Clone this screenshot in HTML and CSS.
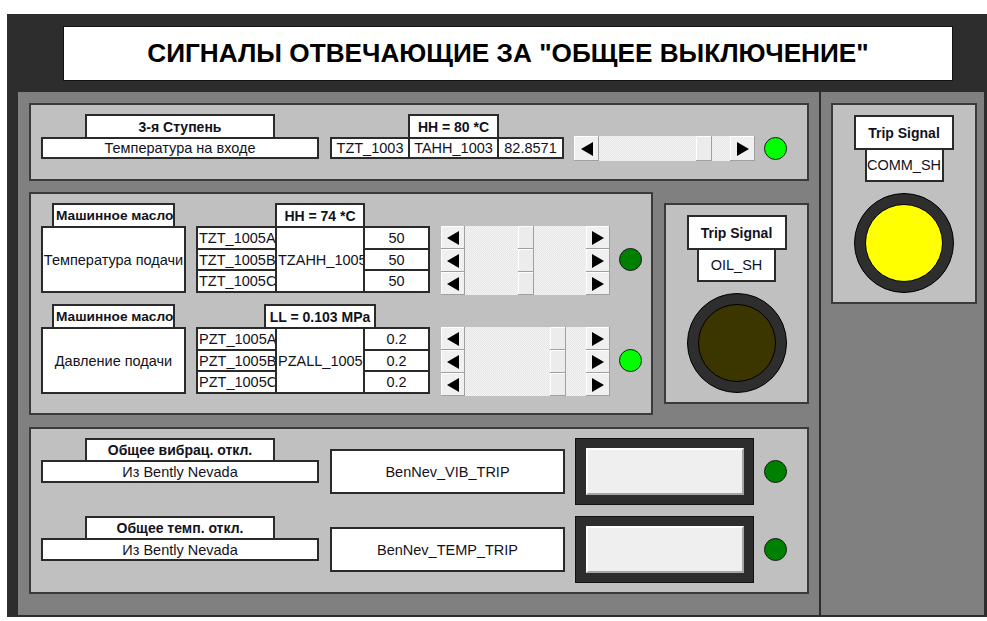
FILE: index.html
```html
<!DOCTYPE html>
<html lang="ru">
<head>
<meta charset="utf-8">
<title>Общее выключение</title>
<link rel="stylesheet" href="styles.css">
</head>
<body>
<div class="screen">
  <div class="title">СИГНАЛЫ ОТВЕЧАЮЩИЕ ЗА "ОБЩЕЕ ВЫКЛЮЧЕНИЕ"</div>
  <div class="body">
    <div class="main">

      <!-- 3rd stage inlet temperature -->
      <section class="panel p-inlet">
        <div class="cap-col w278">
          <div class="cap w190">3-я Ступень</div>
          <div class="cell h22 w278">Температура на входе</div>
        </div>
        <div class="cell h22 tag1003">TZT_1003</div>
        <div class="cap-col w91 join">
          <div class="cap w91">HH = 80 *C</div>
          <div class="cell h22 w91">TAHH_1003</div>
        </div>
        <div class="cell h22 w67 join">82.8571</div>
        <div class="sb sb-wide">
          <span class="sb-btn sb-l"></span>
          <span class="sb-track"><span class="sb-thumb" style="margin-left:97px"></span></span>
          <span class="sb-btn sb-r"></span>
        </div>
        <span class="led led-on led-inlet"></span>
      </section>

      <div class="row-mid">
        <!-- lube oil: temperature and pressure -->
        <section class="panel p-oil">
          <div class="grp">
            <div class="cap-col w145">
              <div class="cap w123 cap-l">Машинное масло</div>
              <div class="cell tall w145">Температура подачи</div>
            </div>
            <div class="stack tags">
              <div class="cell left">TZT_1005A</div>
              <div class="cell left">TZT_1005B</div>
              <div class="cell left">TZT_1005C</div>
            </div>
            <div class="cap-col w90 join">
              <div class="cap w90">HH = 74 *C</div>
              <div class="cell tall w90 left">TZAHH_1005</div>
            </div>
            <div class="stack vals join">
              <div class="cell">50</div>
              <div class="cell">50</div>
              <div class="cell">50</div>
            </div>
            <div class="sb-stack">
              <div class="sb"><span class="sb-btn sb-l"></span><span class="sb-track"><span class="sb-thumb" style="margin-left:53px"></span></span><span class="sb-btn sb-r"></span></div>
              <div class="sb"><span class="sb-btn sb-l"></span><span class="sb-track"><span class="sb-thumb" style="margin-left:53px"></span></span><span class="sb-btn sb-r"></span></div>
              <div class="sb"><span class="sb-btn sb-l"></span><span class="sb-track"><span class="sb-thumb" style="margin-left:53px"></span></span><span class="sb-btn sb-r"></span></div>
            </div>
            <span class="led led-off led-grp"></span>
          </div>

          <div class="grp grp-2">
            <div class="cap-col w145">
              <div class="cap w123 cap-l">Машинное масло</div>
              <div class="cell tall w145">Давление подачи</div>
            </div>
            <div class="stack tags">
              <div class="cell left">PZT_1005A</div>
              <div class="cell left">PZT_1005B</div>
              <div class="cell left">PZT_1005C</div>
            </div>
            <div class="cap-col w90 join">
              <div class="cap w112">LL = 0.103 MPa</div>
              <div class="cell tall w90 left">PZALL_1005</div>
            </div>
            <div class="stack vals join">
              <div class="cell">0.2</div>
              <div class="cell">0.2</div>
              <div class="cell">0.2</div>
            </div>
            <div class="sb-stack">
              <div class="sb"><span class="sb-btn sb-l"></span><span class="sb-track"><span class="sb-thumb" style="margin-left:85px"></span></span><span class="sb-btn sb-r"></span></div>
              <div class="sb"><span class="sb-btn sb-l"></span><span class="sb-track"><span class="sb-thumb" style="margin-left:85px"></span></span><span class="sb-btn sb-r"></span></div>
              <div class="sb"><span class="sb-btn sb-l"></span><span class="sb-track"><span class="sb-thumb" style="margin-left:85px"></span></span><span class="sb-btn sb-r"></span></div>
            </div>
            <span class="led led-on led-grp"></span>
          </div>
        </section>

        <!-- oil trip lamp -->
        <section class="panel trip">
          <div class="trip-cap">Trip Signal</div>
          <div class="trip-sub">OIL_SH</div>
          <div class="lamp"><i class="lamp-off"></i></div>
        </section>
      </div>

      <!-- Bently Nevada trips -->
      <section class="panel p-bn">
        <div class="bn-row">
          <div class="cap-col w278 bn-head">
            <div class="cap w190 h24">Общее вибрац. откл.</div>
            <div class="cell w278 h23">Из Bently Nevada</div>
          </div>
          <div class="cell bn-tag">BenNev_VIB_TRIP</div>
          <div class="bn-disp"><div class="bn-screen"></div></div>
          <span class="led led-off led-bn"></span>
        </div>
        <div class="bn-row bn-row-2">
          <div class="cap-col w278 bn-head">
            <div class="cap w190 h24">Общее темп. откл.</div>
            <div class="cell w278 h23">Из Bently Nevada</div>
          </div>
          <div class="cell bn-tag">BenNev_TEMP_TRIP</div>
          <div class="bn-disp"><div class="bn-screen"></div></div>
          <span class="led led-off led-bn"></span>
        </div>
      </section>
    </div>

    <div class="side">
      <!-- common trip lamp -->
      <section class="panel trip trip-comm">
        <div class="trip-cap">Trip Signal</div>
        <div class="trip-sub">COMM_SH</div>
        <div class="lamp"><i class="lamp-on"></i></div>
      </section>
    </div>
  </div>
</div>
</body>
</html>
```

FILE: styles.css
```css
* { box-sizing: border-box; }

html, body {
  margin: 0;
  background: #fff;
}

body {
  font-family: "Liberation Sans", Arial, sans-serif;
  font-size: 14.5px;
  color: #12121c;
}

/* outer dark frame */
.screen {
  margin: 14px 0 0 7px;
  width: 980px;
  height: 603px;
  background: #2d2d2d;
  padding: 12px 3px 2px 11px;
  display: flex;
  flex-direction: column;
}

.title {
  margin-left: 45px;
  width: 890px;
  height: 55px;
  flex: none;
  background: #fff;
  border: 1px solid #111;
  display: flex;
  align-items: center;
  justify-content: center;
  font-weight: bold;
  font-size: 26.2px;
  color: #000;
  white-space: nowrap;
  padding-bottom: 1px;
}

.body {
  margin-top: 11px;
  flex: 1;
  display: flex;
}

.main {
  width: 801px;
  background: #808080;
  padding: 11px 0 0 11px;
}

.side {
  flex: 1;
  background: #808080;
  border-left: 2px solid #2d2d2d;
  padding: 11px 0 0 10px;
}

.panel {
  background: #c0c0c0;
  border: 2px solid #3a3a3a;
}

/* generic boxes */
.cell {
  background: #fff;
  border: 2px solid #2a2a2a;
  display: flex;
  align-items: center;
  justify-content: center;
  white-space: nowrap;
  padding: 0 1px;
}

.cell.left { justify-content: flex-start; }

.cap {
  height: 25px;
  margin-bottom: -2px;
  background: #fff;
  border: 2px solid #2a2a2a;
  display: flex;
  align-items: center;
  justify-content: center;
  white-space: nowrap;
  font-weight: bold;
  font-size: 14px;
  position: relative;
}

.cap-l { justify-content: flex-start; padding-left: 2px; font-size: 13.7px; }

.cap-col {
  display: flex;
  flex-direction: column;
  align-items: center;
}

.join { margin-left: -2px; }

.h22 { height: 22px; }
.h23 { height: 23px; }
.h24 { height: 24px; }
.tall { height: 67px; }

.w67 { width: 67px; }
.w90 { width: 90px; }
.w91 { width: 91px; }
.w112 { width: 112px; flex: none; }
.w123 { width: 123px; }
.w145 { width: 145px; }
.w190 { width: 190px; }
.w278 { width: 278px; }

/* inlet temperature panel */
.p-inlet {
  width: 780px;
  height: 78px;
  display: flex;
  align-items: flex-end;
  padding: 0 0 20px 10px;
}

.tag1003 {
  margin-left: 11px;
  width: 80px;
}

/* scrollbars */
.sb {
  display: flex;
  height: 23px;
}

.sb-wide {
  margin-left: 10px;
  width: 181px;
  height: 25px;
  margin-bottom: -2px;
}

.sb-btn {
  width: 24px;
  flex: none;
  background: #f0f0f0;
  box-shadow: inset -1px -1px 0 #a0a0a0, inset 1px 1px 0 #fff;
  display: flex;
  align-items: center;
  justify-content: center;
}

.sb-wide .sb-btn { width: 25px; }

.sb-btn::before {
  content: "";
  width: 0;
  height: 0;
  border-style: solid;
}

.sb-l::before {
  border-width: 7px 12px 7px 0;
  border-color: transparent #000 transparent transparent;
}

.sb-r::before {
  border-width: 7px 0 7px 12px;
  border-color: transparent transparent transparent #000;
}

.sb-track {
  flex: 1;
  display: flex;
  background: repeating-conic-gradient(#f6f6f6 0 25%, #e4e4e4 0 50%) 0 0 / 2px 2px;
}

.sb-thumb {
  width: 16px;
  flex: none;
  background: #ececec;
  box-shadow: inset -1px -1px 0 #a0a0a0, inset 1px 1px 0 #fff;
}

.sb-stack {
  margin-left: 11px;
  width: 169px;
  margin-bottom: -2px;
  display: flex;
  flex-direction: column;
}

/* lamps */
.led {
  width: 23px;
  height: 23px;
  flex: none;
  border-radius: 50%;
  border: 1px solid #1a1a1a;
}

.led-on { background: #00ff00; }
.led-off { background: #008000; }

.led-inlet { margin-left: 9px; margin-bottom: -1px; }
.led-grp { margin-left: 9px; margin-bottom: 22px; }
.led-bn { margin-left: 10px; }

/* middle row */
.row-mid {
  margin-top: 11px;
  display: flex;
  align-items: center;
}

.p-oil {
  width: 624px;
  height: 223px;
  padding: 9px 0 0 10px;
}

.grp {
  height: 90px;
  display: flex;
  align-items: flex-end;
}

.grp-2 { margin-top: 11px; }

.stack {
  height: 67px;
  display: flex;
  flex-direction: column;
}

.stack .cell { flex: 1; }
.stack .cell + .cell { margin-top: -2px; }

.tags {
  margin-left: 10px;
  width: 81px;
}

.vals { width: 67px; }

/* trip signal panels */
.trip {
  margin-left: 11px;
  width: 145px;
  height: 201px;
  display: flex;
  flex-direction: column;
  align-items: center;
  padding-top: 10px;
}

.trip-comm {
  margin-left: 0;
  width: 146px;
}

.trip-cap {
  width: 100px;
  height: 35px;
  background: #fff;
  border: 2px solid #2a2a2a;
  display: flex;
  align-items: center;
  justify-content: center;
  font-weight: bold;
  font-size: 14px;
}

.trip-sub {
  margin-top: -2px;
  width: 79px;
  height: 34px;
  background: #fff;
  border: 2px solid #2a2a2a;
  display: flex;
  align-items: center;
  justify-content: center;
}

.lamp {
  margin-top: 11px;
  width: 100px;
  height: 100px;
  border-radius: 50%;
  background: #2e2e2e;
  border: 1px solid #000;
  display: flex;
  align-items: center;
  justify-content: center;
}

.lamp i {
  width: 78px;
  height: 78px;
  border-radius: 50%;
  border: 1px solid #000;
}

.lamp-off { background: #3b3500; }
.lamp-on { background: #ffff00; }

/* Bently Nevada panel */
.p-bn {
  margin-top: 12px;
  width: 780px;
  height: 167px;
  padding: 9px 0 0 10px;
}

.bn-row {
  height: 67px;
  display: flex;
  align-items: center;
}

.bn-row-2 { margin-top: 11px; }

.bn-head { align-self: flex-start; }

.bn-tag {
  margin-left: 11px;
  width: 235px;
  height: 45px;
}

.bn-disp {
  margin-left: 10px;
  width: 179px;
  height: 67px;
  background: #2d2d2d;
  border: 1px solid #111;
  padding: 9px 9px 9px 10px;
}

.bn-screen {
  height: 100%;
  background: #efefef;
  border-top: 2px solid #fdfdfd;
  border-left: 2px solid #fdfdfd;
  border-bottom: 2px solid #a4a4a4;
  border-right: 2px solid #a4a4a4;
}
```
